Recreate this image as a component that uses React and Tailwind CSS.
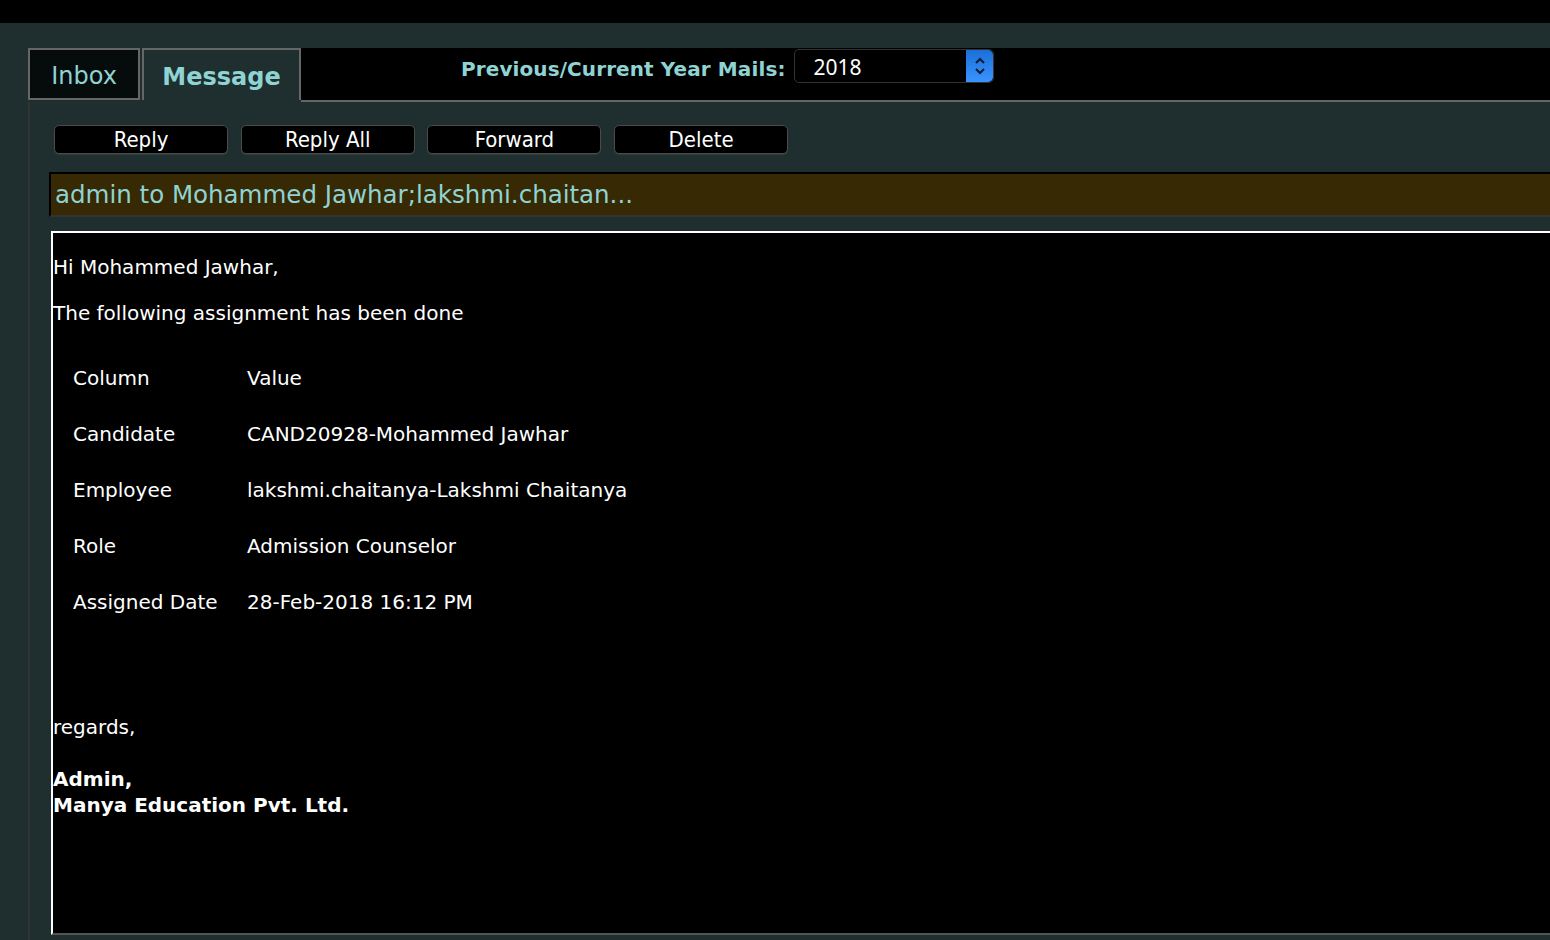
import React from "react";

const rows = [
  ["Column", "Value"],
  ["Candidate", "CAND20928-Mohammed Jawhar"],
  ["Employee", "lakshmi.chaitanya-Lakshmi Chaitanya"],
  ["Role", "Admission Counselor"],
  ["Assigned Date", "28-Feb-2018 16:12 PM"],
];

export default function App() {
  const font = { fontFamily: '"DejaVu Sans", Verdana, sans-serif' };
  return (
    <div className="w-[1550px] h-[940px] overflow-hidden bg-[#1f2f2f] flex flex-col" style={font}>
      <div className="h-[23px] bg-black shrink-0" />
      <div className="flex-1 pl-[28px] pt-[25px] flex flex-col">
        {/* tabs row */}
        <div className="flex h-[54px] shrink-0">
          <div className="w-[112px] h-[52px] bg-[#050c0b] border-2 border-[#666] flex items-center justify-center pt-[3px] text-[24px] text-[#8fd3d3]">
            Inbox
          </div>
          <div className="w-[2px]" />
          <div className="w-[159px] h-[52px] bg-[#1f2f2f] border-2 border-b-0 border-[#666] flex items-center justify-center pt-[3px] text-[24px] font-bold text-[#8fd3d3]">
            Message
          </div>
          <div className="flex-1 h-[54px] bg-black border-b-2 border-[#666] flex items-start pl-[160px] pt-[1px]">
            <span className="text-[20px] font-bold text-[#8fd3d3] mt-[5px] tracking-[0.1px]">Previous/Current Year Mails:</span>
            <div className="ml-[9px] w-[200px] h-[34px] rounded-[5px] border border-[#333] bg-black flex">
              <span className="flex-1 text-white text-[21px] pl-[18px] leading-[34px]" style={{ fontFamily: '"Noto Sans", sans-serif' }}>2018</span>
              <div className="w-[27px] h-full rounded-r-[5px] bg-gradient-to-b from-[#1a6fd8] to-[#3a94ff] flex items-center justify-center">
                <svg width="12" height="20" viewBox="0 0 12 20" fill="none" stroke="#0a1a30" strokeWidth="2">
                  <path d="M2 7 L6 3 L10 7" />
                  <path d="M2 13 L6 17 L10 13" />
                </svg>
              </div>
            </div>
          </div>
        </div>
        {/* content panel */}
        <div className="flex-1 border-l-2 border-[#333] flex flex-col pl-[19px]">
          <div className="flex gap-[12.7px] pt-[23px] pl-[5px]">
            {["Reply", "Reply All", "Forward", "Delete"].map((b) => (
              <div
                key={b}
                className="w-[174px] h-[29px] rounded-[5px] bg-black border border-[#4a4a4a] text-white text-[22px] leading-[22px] flex items-center justify-center shadow-[0_1px_1px_rgba(255,255,255,0.08)]"
                style={{ fontFamily: '"DejaVu Sans Condensed", "DejaVu Sans", sans-serif' }}
              >
                {b}
              </div>
            ))}
          </div>
          <div className="mt-[18px] h-[45px] bg-[#372903] border-2 border-black border-b-[#333] border-r-0 flex items-center pl-[4px] pt-[2px] text-[24.5px] text-[#8fd3d3]">
            admin to Mohammed Jawhar;lakshmi.chaitan...
          </div>
          <div className="mt-[14px] ml-[2px] h-[704px] bg-black border-l-2 border-t-2 border-white border-b-2 border-b-[#555] text-white text-[20px] leading-[24px]">
            <div className="pt-[22px]">Hi Mohammed Jawhar,</div>
            <div className="mt-[22px]">The following assignment has been done</div>
            <table className="mt-[25px] ml-[2px] border-separate border-spacing-0">
              <tbody>
                {rows.map(([a, b]) => (
                  <tr key={a}>
                    <td className="w-[192px] pl-[18px] h-[56px] align-middle">{a}</td>
                    <td className="pl-[0px] h-[56px] align-middle">{b}</td>
                  </tr>
                ))}
              </tbody>
            </table>
            <div className="mt-[85px]">regards,</div>
            <div className="mt-[27px] font-bold leading-[26px]">
              Admin,
              <br />
              Manya Education Pvt. Ltd.
            </div>
          </div>
        </div>
      </div>
    </div>
  );
}
